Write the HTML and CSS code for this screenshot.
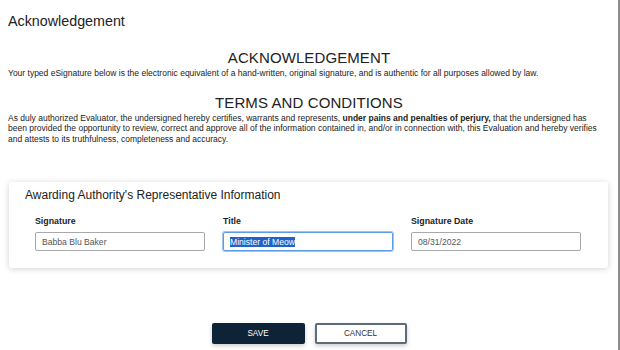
FILE: index.html
```html
<!DOCTYPE html>
<html lang="en">
  <head>
    <meta charset="UTF-8" />
    <meta name="viewport" content="width=device-width, initial-scale=1.0" />
    <title>Acknowledgement</title>
    <link rel="stylesheet" href="styles.css">
  </head>
  <body>
    <div class="modal">
      <!-- Header -->
      <h2 class="modal-title">Acknowledgement</h2>

      <!-- Body -->
      <div class="modal-body">
        <h3 class="section-heading">ACKNOWLEDGEMENT</h3>
        <p class="legal legal-intro">
          Your typed eSignature below is the electronic equivalent of a hand-written, original signature, and is authentic for all purposes allowed by law.
        </p>

        <h3 class="section-heading">TERMS AND CONDITIONS</h3>
        <p class="legal">
          As duly authorized Evaluator, the undersigned hereby certifies, warrants and represents, <strong>under pains and penalties of perjury,</strong> that the undersigned has been provided the opportunity to review, correct and approve all of the information contained in, and/or in connection with, this Evaluation and hereby verifies and attests to its truthfulness, completeness and accuracy.
        </p>

        <div class="card">
          <h4 class="card-title">Awarding Authority's Representative Information</h4>
          <div class="fields">
            <div class="field">
              <label class="field-label">Signature</label>
              <input class="field-input" type="text" value="Babba Blu Baker" />
            </div>
            <div class="field">
              <label class="field-label">Title</label>
              <div class="field-input focused"><span class="selected">Minister of Meow</span></div>
            </div>
            <div class="field">
              <label class="field-label">Signature Date</label>
              <input class="field-input" type="text" value="08/31/2022" />
            </div>
          </div>
        </div>
      </div>

      <!-- Footer -->
      <div class="actions">
        <button class="btn btn-primary">SAVE</button>
        <button class="btn btn-outline">CANCEL</button>
      </div>
    </div>
  </body>
</html>
```

FILE: styles.css
```css
/* General Styles */
body {
  margin: 0;
  background: #fff;
  font-family: "Liberation Sans", Arial, sans-serif;
  color: #222;
}

.modal {
  width: 620px;
  height: 350px;
  border-right: 2px solid #8c8c8c;
  box-sizing: border-box;
  overflow: hidden;
}

.modal-title {
  margin: 0;
  padding: 12px 8px 0;
  font-size: 14.3px;
  font-weight: normal;
  line-height: 18px;
}

/* Body */
.modal-body {
  padding: 0 8px;
}

.section-heading {
  margin: 0;
  text-align: center;
  font-size: 15px;
  font-weight: normal;
  letter-spacing: 0.1px;
  line-height: 18px;
}

.section-heading:first-child {
  margin-top: 19px;
}

.legal {
  margin: 1px 0 0;
  padding-right: 6px;
  font-size: 8.5px;
  line-height: 10.5px;
}

.legal-intro {
  margin-bottom: 15px;
}

.legal strong {
  font-weight: bold;
}

/* Card */
.card {
  margin: 38px 2px 0 1px;
  padding: 6px 16px 17px;
  background: #fff;
  border-radius: 3px;
  box-shadow: 0 1px 6px rgba(0, 0, 0, 0.18);
}

.card-title {
  margin: 0 0 13px;
  font-size: 12px;
  font-weight: normal;
  line-height: 15px;
}

.fields {
  display: flex;
  gap: 18px;
  padding-left: 10px;
}

.field {
  display: flex;
  flex-direction: column;
  gap: 5px;
}

.field-label {
  font-size: 8.8px;
  font-weight: bold;
  line-height: 11px;
}

.field-input {
  width: 170px;
  height: 19px;
  box-sizing: border-box;
  padding: 0 6px;
  border: 1px solid #a9a9a9;
  border-radius: 2px;
  font-family: inherit;
  font-size: 8.6px;
  color: #555;
  outline: none;
}

.field-input.focused {
  display: flex;
  align-items: center;
  border-color: #5b9ee6;
  box-shadow: 0 0 0 1px #9cc6f2;
}

.selected {
  background: #1e63c9;
  color: #fff;
}

/* Buttons */
.actions {
  display: flex;
  justify-content: center;
  gap: 10px;
  margin-top: 55px;
}

.btn {
  width: 93px;
  height: 21px;
  border-radius: 2px;
  font-family: inherit;
  font-size: 8.2px;
  box-shadow: 0 2px 4px rgba(0, 0, 0, 0.2);
}

.btn-primary {
  background: #0e2338;
  border: none;
  color: #fff;
}

.btn-outline {
  width: 92px;
  background: #fff;
  border: 2px solid #5d6c7a;
  color: #333;
}
```
